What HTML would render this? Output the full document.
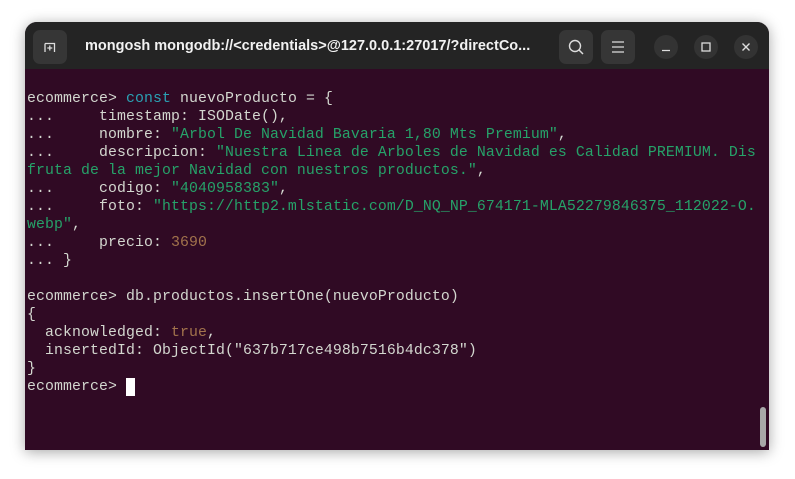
<!DOCTYPE html>
<html><head><meta charset="utf-8"><style>
body{margin:0;width:795px;height:479px;background:#fff;position:relative;overflow:hidden;font-family:"Liberation Sans",sans-serif}
.win{position:absolute;left:25px;top:22px;width:744px;height:428px;border-radius:12px 12px 0 0;overflow:hidden;box-shadow:0 2px 14px rgba(0,0,0,.35);background:#300a24}
.hdr{position:absolute;left:0;top:0;width:744px;height:47px;background:#242424}
.btn{position:absolute;top:8px;width:34px;height:34px;border-radius:7px;background:#363636}
.cir{position:absolute;top:13px;width:24px;height:24px;border-radius:50%;background:#333}
.title{position:absolute;left:60px;top:16px;color:#f2f2f2;font-weight:bold;font-size:14.5px;white-space:nowrap}
pre{position:absolute;left:2px;top:68px;margin:0;font-family:"Liberation Mono",monospace;font-size:14.85px;letter-spacing:0.09px;line-height:18px;color:#d3d7cf}
.k{color:#2aa1b3}.s{color:#26a269}.n{color:#a2734c}
.cur{display:inline-block;width:9px;height:18px;background:#fff;vertical-align:top}
.sb{position:absolute;left:735px;top:385px;width:6px;height:40px;border-radius:3px;background:#a8a8a8}
</style></head><body>
<div class="win">
<div class="hdr">
<div class="btn" style="left:8px"><svg width="34" height="34"><path d="M12 13.5h9.5v8.5M12 13.5v8.5" fill="none" stroke="#ddd" stroke-width="1.3"/><path d="M16.8 15.5v5M14.3 18h5" stroke="#ddd" stroke-width="1.3"/></svg></div>
<div class="title">mongosh mongodb://&lt;credentials&gt;@127.0.0.1:27017/?directCo...</div>
<div class="btn" style="left:534px"><svg width="34" height="34"><circle cx="16" cy="16" r="5.5" fill="none" stroke="#ddd" stroke-width="1.4"/><path d="M20 20l4 4" stroke="#ddd" stroke-width="1.5"/></svg></div>
<div class="btn" style="left:576px"><svg width="34" height="34"><path d="M11 12h12M11 17h12M11 22h12" stroke="#ddd" stroke-width="1.3"/></svg></div>
<div class="cir" style="left:629px"><svg width="24" height="24"><path d="M8 15.5h8" stroke="#ddd" stroke-width="1.3"/></svg></div>
<div class="cir" style="left:669px"><svg width="24" height="24"><rect x="8" y="8" width="8" height="8" fill="none" stroke="#ddd" stroke-width="1.3"/></svg></div>
<div class="cir" style="left:709px"><svg width="24" height="24"><path d="M8.5 8.5l7 7M15.5 8.5l-7 7" stroke="#ddd" stroke-width="1.4"/></svg></div>
</div>
<pre>ecommerce&gt; <span class="k">const</span> nuevoProducto = {
...     timestamp: ISODate(),
...     nombre: <span class="s">"Arbol De Navidad Bavaria 1,80 Mts Premium"</span>,
...     descripcion: <span class="s">"Nuestra Linea de Arboles de Navidad es Calidad PREMIUM. Dis
fruta de la mejor Navidad con nuestros productos."</span>,
...     codigo: <span class="s">"4040958383"</span>,
...     foto: <span class="s">"https://http2.mlstatic.com/D_NQ_NP_674171-MLA52279846375_112022-O.
webp"</span>,
...     precio: <span class="n">3690</span>
... }

ecommerce&gt; db.productos.insertOne(nuevoProducto)
{
  acknowledged: <span class="n">true</span>,
  insertedId: ObjectId("637b717ce498b7516b4dc378")
}
ecommerce&gt; <span class="cur"></span></pre>
<div class="sb"></div>
</div>
</body></html>
